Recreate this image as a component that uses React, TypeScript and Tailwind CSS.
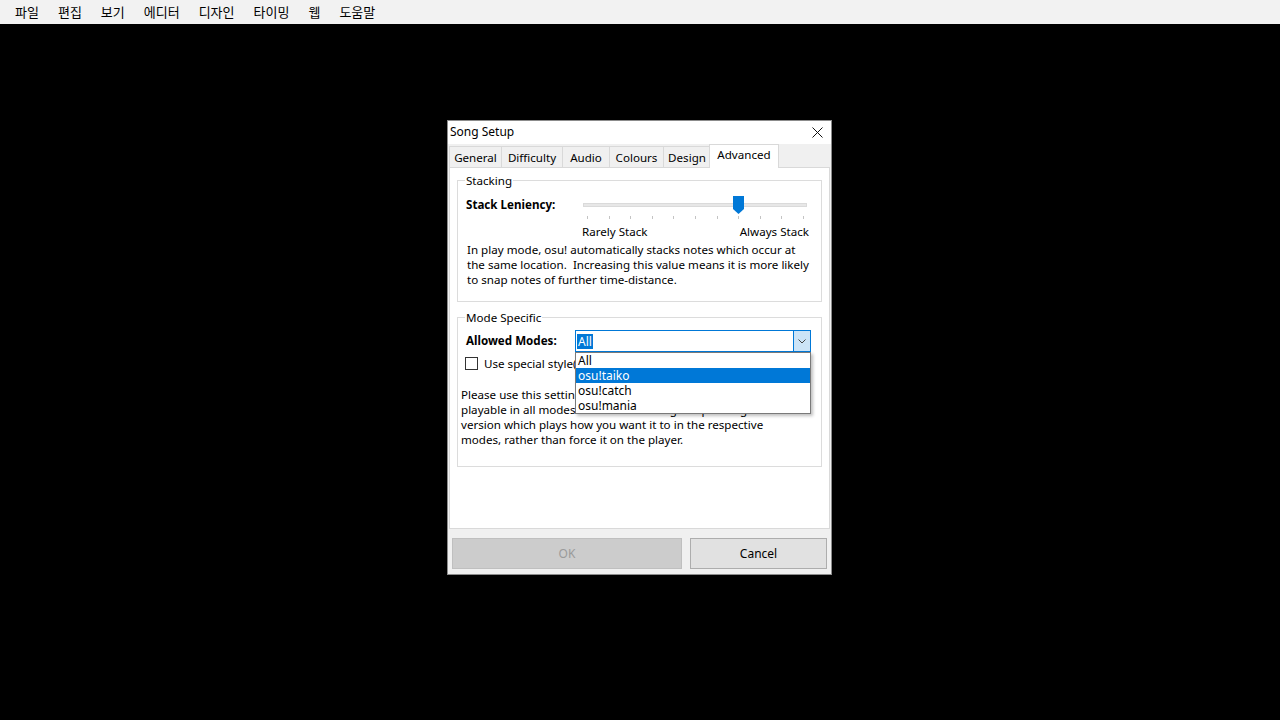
import React from 'react';

const menus = ['파일', '편집', '보기', '에디터', '디자인', '타이밍', '웹', '도움말'];
const tabs = [
  { name: 'General', w: 'w-[52px]' },
  { name: 'Difficulty', w: 'w-[61px]' },
  { name: 'Audio', w: 'w-[47px]' },
  { name: 'Colours', w: 'w-[54px]' },
  { name: 'Design', w: 'w-[48px]' },
];
const modes = ['All', 'osu!taiko', 'osu!catch', 'osu!mania'];

function Slider() {
  const ticks = Array.from({ length: 11 });
  return (
    <div>
      <div className="relative w-[224px] h-[20px]">
        <div className="absolute left-0 right-0 top-[8px] h-[4px] bg-[#e7e7e7] border border-[#dadada]" />
        <svg className="absolute left-[150px] top-[1px]" width="11" height="18" viewBox="0 0 11 18">
          <path d="M0 0 H11 V13 L5.5 18 L0 13 Z" fill="#0078d7" />
        </svg>
      </div>
      <div className="ml-[4px] mt-[1px] w-[217px] h-[3px] flex justify-between">
        {ticks.map((_, i) => (
          <div key={i} className="w-[1px] h-[3px] bg-[#c4c4c4]" />
        ))}
      </div>
    </div>
  );
}

export default function App() {
  return (
    <div className="w-[1280px] h-[720px] bg-black overflow-hidden font-['Noto_Sans','Noto_Sans_CJK_KR',sans-serif] text-[11.6px] text-black">
      <div className="h-[24px] bg-[#f2f2f2] flex items-center pl-[15px] gap-[19px] font-['Noto_Sans_CJK_KR',sans-serif] text-[13px]">
        {menus.map((m) => (
          <span key={m}>{m}</span>
        ))}
      </div>

      <div className="ml-[447px] mt-[96px] w-[385px] h-[455px] border border-[#8c8c8c] bg-[#f0f0f0] flex flex-col">
        {/* title bar */}
        <div className="h-[23px] bg-white flex items-center justify-between pl-[2px] pr-[8px] pb-[2px] text-[12px]">
          <span className="leading-[15px]">Song Setup</span>
          <svg width="11" height="11" viewBox="0 0 11 11" className="mt-[1px]">
            <path d="M0.5 0.5 L10.5 10.5 M10.5 0.5 L0.5 10.5" stroke="#111" strokeWidth="1" />
          </svg>
        </div>

        {/* tabs */}
        <div className="h-[24px] flex items-end pl-[1px]">
          {tabs.map((t, i) => (
            <div
              key={t.name}
              className={`${t.w} h-[22px] bg-[#f0f0f0] border-t border-l border-[#d9d9d9] ${i === tabs.length - 1 ? 'border-r' : ''} flex items-center justify-center leading-[15px]`}
            >
              {t.name}
            </div>
          ))}
          <div className="relative z-10 -ml-[2px] w-[70px] h-[24px] bg-white border-t border-l border-r border-[#d9d9d9] flex justify-center pt-[2px] leading-[15px]">
            Advanced
          </div>
        </div>

        {/* panel */}
        <div className="-mt-[1px] ml-[1px] w-[381px] h-[362px] bg-white border border-[#d9d9d9] px-[7px] pt-[5px]">
          <fieldset className="w-[365px] h-[129px] border border-[#dcdcdc]">
            <legend className="ml-[7px] px-[1px] leading-[15px]">Stacking</legend>
            <div className="mt-[7px] h-[20px] flex items-center">
              <div className="w-[125px] pl-[8px] font-bold">Stack Leniency:</div>
              <div className="self-start">
                <Slider />
              </div>
            </div>
            <div className="mt-[9px] ml-[124px] w-[227px] h-[15px] leading-[15px] flex justify-between">
              <span>Rarely Stack</span>
              <span>Always Stack</span>
            </div>
            <p className="mt-[3px] pl-[9px] leading-[15px] whitespace-pre">
              In play mode, osu! automatically stacks notes which occur at
              <br />
              the same location.  Increasing this value means it is more likely
              <br />
              to snap notes of further time-distance.
            </p>
          </fieldset>

          <fieldset className="mt-[8px] w-[365px] h-[157px] border border-[#dcdcdc]">
            <legend className="ml-[7px] px-[1px] leading-[15px]">Mode Specific</legend>
            <div className="mt-[5px] h-[22px] flex items-center">
              <div className="w-[117px] pl-[8px] font-bold">Allowed Modes:</div>
              <div className="relative w-[236px] h-[22px] border border-[#0078d7] bg-white flex">
                <div className="flex-1 flex items-center pl-[1px]">
                  <span className="bg-[#0078d7] text-white px-[1px] h-[15px] leading-[15px] text-[12px]">All</span>
                </div>
                <div className="w-[17px] h-full border-l border-[#0078d7] bg-[#cce4f7] flex items-center justify-center">
                  <svg width="8" height="5" viewBox="0 0 8 5">
                    <path d="M0.5 0.5 L4 4 L7.5 0.5" fill="none" stroke="#444" strokeWidth="1" />
                  </svg>
                </div>
                <div className="absolute left-[-1px] top-[21px] z-20 w-[236px] h-[62px] bg-white border border-[#7a7a7a] shadow-[2px_2px_3px_rgba(0,0,0,0.25)] text-[12px]">
                  {modes.map((m, i) => (
                    <div
                      key={m}
                      className={`h-[15px] leading-[15px] pl-[2px] ${i === 1 ? 'bg-[#0078d7] text-white' : ''}`}
                    >
                      {m}
                    </div>
                  ))}
                </div>
              </div>
            </div>
            <div className="mt-[4px] h-[15px] flex items-center">
              <div className="ml-[7px] w-[13px] h-[13px] border border-[#333] bg-white" />
              <span className="ml-[6px] leading-[15px]">Use special style(s) for mode</span>
            </div>
            <p className="mt-[16px] pl-[3px] leading-[15px] whitespace-pre">
              Please use this setting only if your beatmap is not entirely
              <br />
              playable in all modes.  Consider making a separate guest
              <br />
              version which plays how you want it to in the respective
              <br />
              modes, rather than force it on the player.
            </p>
          </fieldset>
        </div>

        {/* buttons */}
        <div className="h-[45px] flex pl-[4px] pt-[9px] gap-[8px] text-[12px]">
          <div className="w-[230px] h-[31px] bg-[#cccccc] border border-[#bfbfbf] text-[#9a9a9a] flex items-center justify-center">
            OK
          </div>
          <div className="w-[137px] h-[31px] bg-[#e1e1e1] border border-[#adadad] flex items-center justify-center">
            Cancel
          </div>
        </div>
      </div>
    </div>
  );
}
